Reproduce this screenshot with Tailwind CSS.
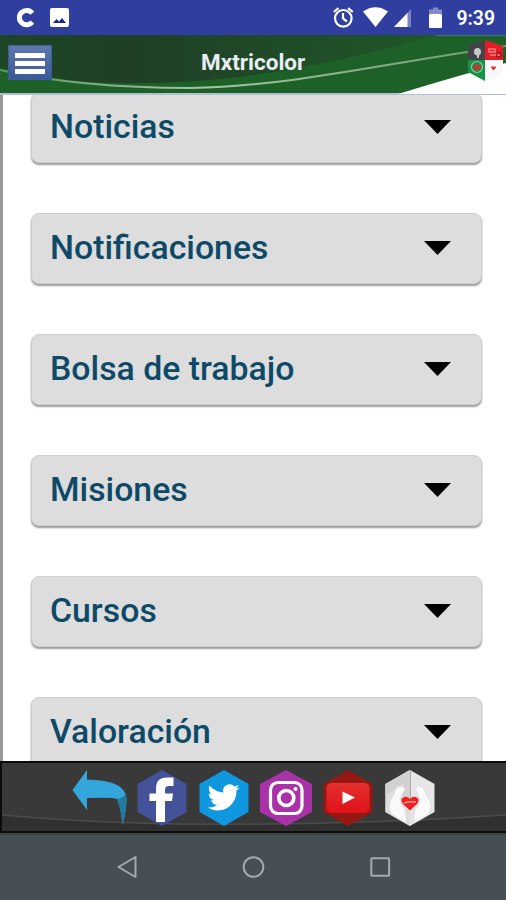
<!DOCTYPE html>
<html lang="es">
  <head>
    <meta charset="UTF-8" />
    <meta name="viewport" content="width=device-width, initial-scale=1.0" />
    <script src="https://cdn.jsdelivr.net/npm/@tailwindcss/browser@4"></script>
    <title>Mxtricolor</title>
  </head>
  <body class="bg-white font-['Roboto','Liberation_Sans',sans-serif]">
    <div class="main-body flex flex-col w-[506px] h-[900px] overflow-hidden">
      <!-- status bar -->
      <div class="status-bar h-[35px] shrink-0 bg-[#303f9f] text-white">
        <svg class="block" width="506" height="35" viewBox="0 0 506 35">
          <path d="M32.300 13.200A7.200 7.200 0 1 0 32.300 22" fill="none" stroke="#fff" stroke-width="5" />
          <rect x="50" y="8" width="19" height="19" rx="2" fill="#fff" />
          <path d="M53 23l3.500-4 2.500 2.500 3-3.500 4 5z" fill="#1d2b86" />
          <g fill="none" stroke="#fff" stroke-width="2.200">
            <circle cx="343.300" cy="18.300" r="8.300" />
            <path d="M343 13v5.500l4 3M333.800 12l4.700-3.800M352.800 12l-4.700-3.800" />
          </g>
          <path d="M363 11.500Q375.500 3 388 11.500L375.500 27z" fill="#fff" />
          <path d="M411 9v18h-17z" fill="#fff" fill-opacity=".35" />
          <path d="M407.500 13V27H394z" fill="#fff" />
          <path d="M433 7.500h5v2h4V14h-13V9.500h4z" fill="#fff" fill-opacity=".4" />
          <rect x="429" y="14" width="13" height="14" rx="1" fill="#fff" />
          <text x="456.500" y="25.200" font-size="20" font-weight="600" textLength="38.500" lengthAdjust="spacingAndGlyphs" fill="#fff">9:39</text>
        </svg>
      </div>

      <!-- header -->
      <div class="header relative h-[60px] shrink-0 border-b-2 border-[#b4bdd6] bg-[#1d6129]">
        <svg class="absolute inset-0" width="506" height="59" viewBox="0 0 506 59">
          <defs>
            <linearGradient id="dark" x1="0" x2="1" y1="0" y2="0">
              <stop offset="0" stop-color="#1d4625" />
              <stop offset=".3" stop-color="#203f25" />
              <stop offset="1" stop-color="#1e5729" />
            </linearGradient>
            <linearGradient id="curve" x1="0" x2="1" y1="0" y2="0">
              <stop offset="0" stop-color="#5c9463" />
              <stop offset=".4" stop-color="#a8c4a5" />
              <stop offset="1" stop-color="#6c9a6d" />
            </linearGradient>
          </defs>
          <path d="M0 0H434Q350 27 240 42Q160 51 90 47Q40 43 0 33z" fill="url(#dark)" />
          <path d="M0 35Q80 53 190 53C290 51 370 31 506 11" fill="none" stroke="url(#curve)" stroke-width="2" />
          <path d="M398 59Q460 40 506 28V59z" fill="#fff" />
          <path d="M436 0H506" stroke="#5b8f91" stroke-width="1" />
          <!-- hexagon badge -->
          <path d="M468 10l17-5v20h-17z" fill="#404448" />
          <path d="M485 5l18 6v14h-18z" fill="#e31c25" />
          <path d="M468 25h17v21l-17-9z" fill="#159347" />
          <path d="M485 25h18v12l-18 9z" fill="#f8f8f8" />
          <path d="M474 17q0-4 3.500-4t3.500 4q0 3-2 3.500V23h-2v-2.500q-3-.5-3-3.500z" fill="#c8c8c8" />
          <path d="M489 14h6v3h-6zm1 6h10" fill="none" stroke="#f07f80" stroke-width="1.500" />
          <circle cx="499" cy="20" r="2.500" fill="none" stroke="#8c101c" stroke-width="1" />
          <circle cx="477" cy="32" r="5.500" fill="none" stroke="#94c89f" stroke-width="1.200" />
          <path d="M477 36l-4.500-4q1-4 4.500-1.500 3.500-2.500 4.500 1.500z" fill="#c93535" />
          <path d="M493.500 35.500l-2.500-3q.5-2 2.500-.5 2-1.500 2.500.5z" fill="#e22b2b" />
        </svg>
        <div class="relative flex h-[58px] items-center">
          <button class="ml-2 mt-[-3px] flex h-[35px] w-[44px] flex-col items-center justify-center gap-[3px] border border-[#3c5f9a] bg-linear-to-b from-[#5f78b0] to-[#3b5998] pt-px">
            <span class="h-[5px] w-[30px] bg-white"></span>
            <span class="h-[5px] w-[30px] bg-white"></span>
            <span class="h-[5px] w-[30px] bg-white"></span>
          </button>
          <h1 class="ml-[149px] mt-[-3px] text-[22.5px] font-bold text-[#e9eef5]">Mxtricolor</h1>
        </div>
      </div>

      <!-- menu list -->
      <div class="menu-list h-[666px] shrink-0 overflow-hidden border-l-3 border-[#999] bg-white pl-7">
        <div class="-mt-[3px] flex w-[451px] flex-col gap-[50px] text-[33.8px] font-[550] text-[#0e4a68]">
          <div class="flex h-[71px] shrink-0 items-center justify-between rounded-lg border border-[#cfcfcf] bg-[#ddd] pb-[2px] pl-[18px] pr-[30px] shadow-[0_2px_2px_rgba(0,0,0,0.4)]">
            <span class="mt-px">Noticias</span>
            <svg width="27" height="14" viewBox="0 0 27 14"><path d="M0 0h27L13.500 14z" /></svg>
          </div>
          <div class="flex h-[71px] shrink-0 items-center justify-between rounded-lg border border-[#cfcfcf] bg-[#ddd] pb-[2px] pl-[18px] pr-[30px] shadow-[0_2px_2px_rgba(0,0,0,0.4)]">
            <span class="mt-px">Notificaciones</span>
            <svg width="27" height="14" viewBox="0 0 27 14"><path d="M0 0h27L13.500 14z" /></svg>
          </div>
          <div class="flex h-[71px] shrink-0 items-center justify-between rounded-lg border border-[#cfcfcf] bg-[#ddd] pb-[2px] pl-[18px] pr-[30px] shadow-[0_2px_2px_rgba(0,0,0,0.4)]">
            <span class="mt-px">Bolsa de trabajo</span>
            <svg width="27" height="14" viewBox="0 0 27 14"><path d="M0 0h27L13.500 14z" /></svg>
          </div>
          <div class="flex h-[71px] shrink-0 items-center justify-between rounded-lg border border-[#cfcfcf] bg-[#ddd] pb-[2px] pl-[18px] pr-[30px] shadow-[0_2px_2px_rgba(0,0,0,0.4)]">
            <span class="mt-px">Misiones</span>
            <svg width="27" height="14" viewBox="0 0 27 14"><path d="M0 0h27L13.500 14z" /></svg>
          </div>
          <div class="flex h-[71px] shrink-0 items-center justify-between rounded-lg border border-[#cfcfcf] bg-[#ddd] pb-[2px] pl-[18px] pr-[30px] shadow-[0_2px_2px_rgba(0,0,0,0.4)]">
            <span class="mt-px">Cursos</span>
            <svg width="27" height="14" viewBox="0 0 27 14"><path d="M0 0h27L13.500 14z" /></svg>
          </div>
          <div class="flex h-[71px] shrink-0 items-center justify-between rounded-lg border border-[#cfcfcf] bg-[#ddd] pb-[2px] pl-[18px] pr-[30px] shadow-[0_2px_2px_rgba(0,0,0,0.4)]">
            <span class="mt-px">Valoración</span>
            <svg width="27" height="14" viewBox="0 0 27 14"><path d="M0 0h27L13.500 14z" /></svg>
          </div>
        </div>
      </div>

      <!-- social links -->
      <div class="footer relative h-[72px] shrink-0 border-y-2 border-l-2 border-[#0c0c0c] bg-[#393939]">
        <svg class="absolute inset-0" width="504" height="68" viewBox="2 763 504 68">
          <path d="M2 815Q90 823 180 824Q340 826 506 815V831H2z" fill="#303030" />
          <path d="M2 815Q90 823 180 824Q340 826 506 815" fill="none" stroke="#4c4c4c" stroke-width="1.500" />
        </svg>
        <div class="relative flex h-full items-center pt-px pl-[70px]">
          <svg width="56" height="58" viewBox="72 769 56 58">
            <path d="M72.500 790L87 770v9.800C108 780 126 784 126.500 799Q126 814 122.500 824.500Q121 808 117 799Q113 797 87 798v12z" fill="#35a6dc" />
            <path d="M117 799q4 0 9.300-5Q127.500 807 122.500 824.500 121 808 117 799z" fill="#227a9d" />
          </svg>
          <svg class="ml-[9px]" width="50" height="58" viewBox="0 0 50 58">
            <path d="M25 1l24.500 14v28L25 57 .5 43V15z" fill="#44529a" />
            <path d="M36.500 8.500v8.500h-4.500q-4 0-4 4v3.500H36l-1 7.500h-7v21h-9v-21H12.500v-7.500H19V19.500q0-11 11-11z" fill="#fff" />
          </svg>
          <svg class="ml-3" width="50" height="58" viewBox="0 0 50 58">
            <path d="M25 1l24.500 14v28L25 57 .5 43V15z" fill="#0f98e0" />
            <path transform="translate(8.500 12.300) scale(1.340)" d="M23.950 4.570a10 10 0 0 1-2.820.78 4.960 4.960 0 0 0 2.160-2.730c-.95.560-2 .960-3.130 1.190a4.920 4.920 0 0 0-8.380 4.480C7.690 8.100 4.070 6.130 1.640 3.160a4.920 4.920 0 0 0 1.520 6.570 4.900 4.900 0 0 1-2.230-.61v.06a4.920 4.920 0 0 0 3.950 4.830 5 5 0 0 1-2.210.08 4.940 4.940 0 0 0 4.600 3.420A9.870 9.870 0 0 1 0 19.540a14 14 0 0 0 7.550 2.210c9.050 0 14-7.500 14-13.980 0-.21 0-.42-.02-.63a9.940 9.940 0 0 0 2.460-2.550z" fill="#fff" />
          </svg>
          <svg class="ml-[11px]" width="52" height="58" viewBox="0 0 52 58">
            <path d="M26 1l26 14v28L26 57 0 43V15z" fill="#aa32a8" />
            <g fill="none" stroke="#fff">
              <rect x="10.500" y="13.500" width="31.500" height="31" rx="7.500" stroke-width="3.200" />
              <circle cx="26.300" cy="29" r="7.500" stroke-width="3.600" />
            </g>
            <circle cx="35.500" cy="20" r="2" fill="#fff" />
          </svg>
          <svg class="ml-[11px]" width="50" height="58" viewBox="0 0 50 58">
            <defs>
              <linearGradient id="play" x1="0" x2="0" y1="0" y2="1">
                <stop offset="0" stop-color="#e3312e" />
                <stop offset="1" stop-color="#e01219" />
              </linearGradient>
            </defs>
            <path d="M25 1l24.500 14v28L25 57 .5 43V15z" fill="#951813" />
            <rect x="3.500" y="14" width="43" height="30" rx="5" fill="url(#play)" />
            <path d="M19.500 22.500l12.500 6-12.500 6.500z" fill="#fff" />
          </svg>
          <svg class="ml-3" width="50" height="58" viewBox="0 0 50 58">
            <path d="M25 1l24.500 14v28L25 57 .5 43V15z" fill="#e6e6e6" />
            <path d="M25 1v56L.5 43V15z" fill="#dedede" />
            <path d="M25 1v31l-4 1L14 17 .5 26V15z" fill="#d0d0d0" />
            <path d="M25 1l1 0v31h-1z" fill="#aaa" />
            <g fill="#fafafa" stroke="#d2d2d2" stroke-width=".6">
              <path d="M14 50L6 45 4 38q0-6 4-11l4-9q2-2.500 2.500.5l3-2.500q2 0 .5 3l2-.5q1 1-1 3.500l-4 8q0 4 3 7 4 5 3 17z" />
              <path d="M36 50l8-5 2-7q0-6-4-11l-4-9q-2-2.500-2.500.5l-3-2.500q-2 0-.5 3l-2-.5q-1 1 1 3.500l4 8q0 4-3 7-4 5-3 17z" />
            </g>
            <path d="M25 41.500l-6.500-6q-3.500-4-1-6.500 4-3 7.500 1 3.500-4 7.500-1 2.500 2.500-1 6.500z" fill="#ee2020" />
            <path d="M19 34q6-2 12-1" fill="none" stroke="#ff9a9a" stroke-width="1.500" />
          </svg>
        </div>
      </div>

      <!-- system navigation -->
      <div class="h-[67px] shrink-0 border-t-2 border-[#3f4746] bg-[#464f54]">
        <svg class="block" width="506" height="65" viewBox="0 835 506 65" fill="none" stroke="#a3a9ac" stroke-width="2" stroke-linejoin="round">
          <path d="M135.500 857v20L118.500 867z" />
          <circle cx="253.500" cy="867" r="9.800" />
          <rect x="371.300" y="858.300" width="17.800" height="17.400" rx=".5" />
        </svg>
      </div>
    </div>
  </body>
</html>
